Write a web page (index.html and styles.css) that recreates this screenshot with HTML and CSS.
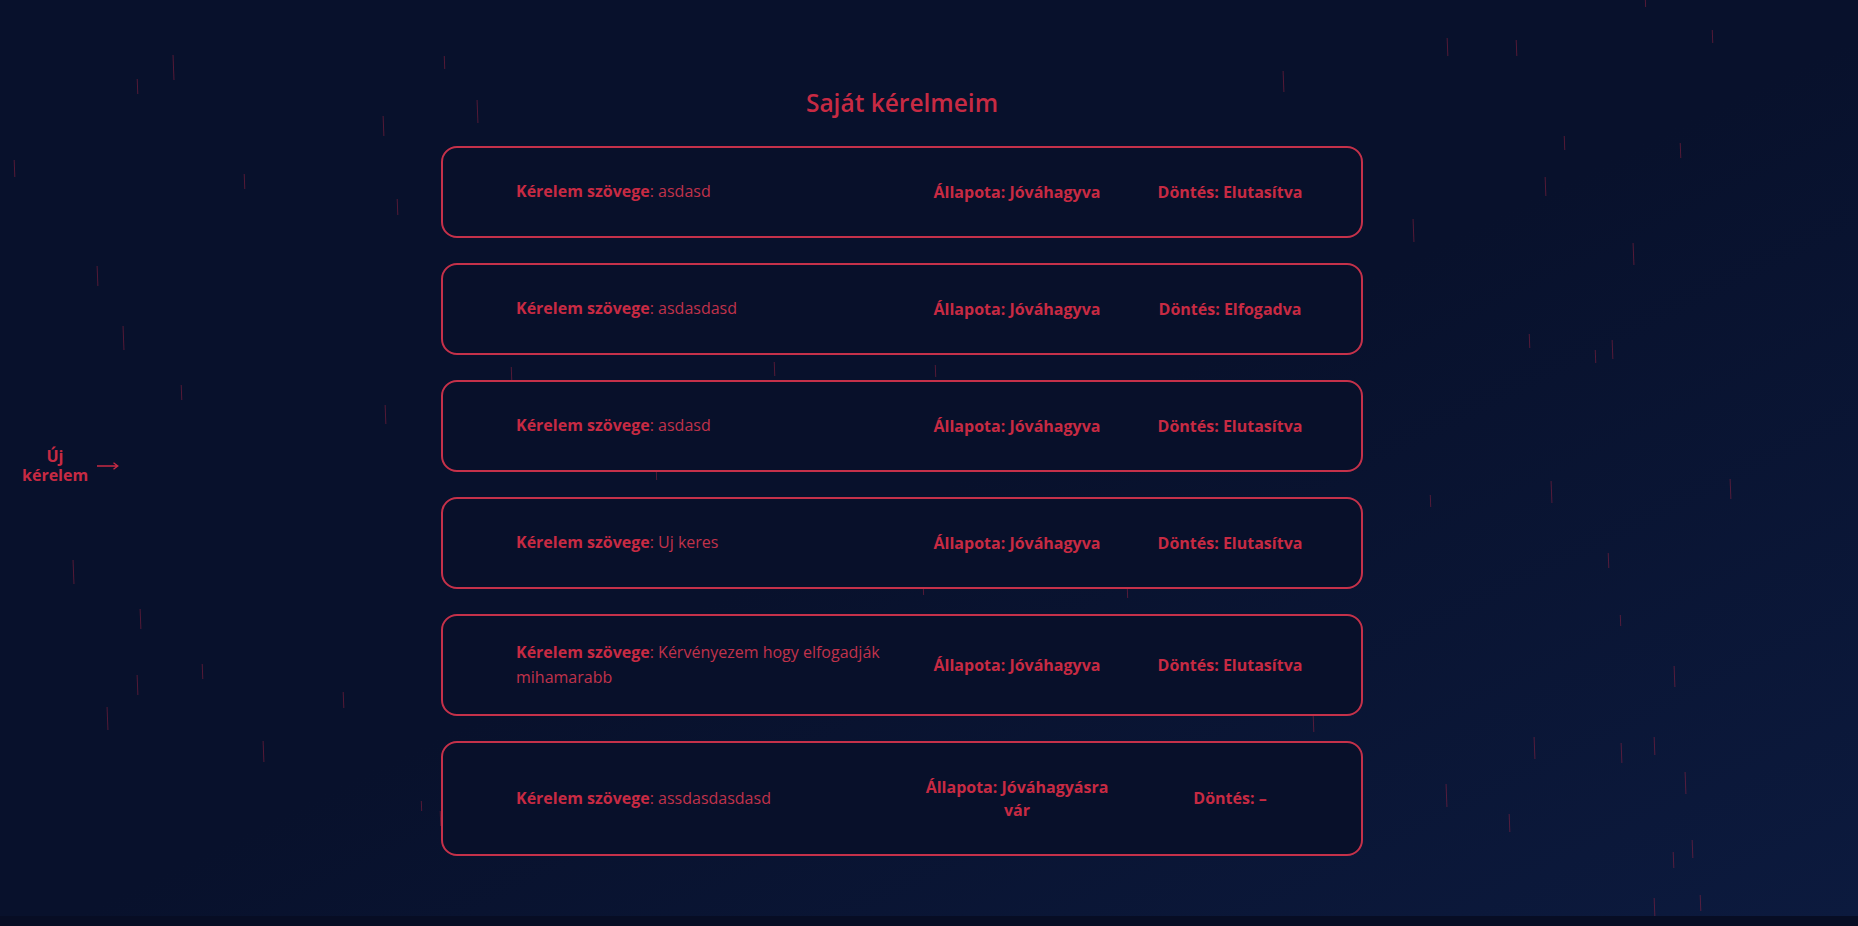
FILE: index.html
```html
<!DOCTYPE html>
<html lang="hu">
<head>
<meta charset="utf-8">
<title>Saját kérelmeim</title>
<link rel="stylesheet" href="styles.css">
</head>
<body>
<div class="page">
  <div class="rain" aria-hidden="true">
    <i class="drop" style="left:1645px;top:0px;height:7px"></i>
    <i class="drop" style="left:1712px;top:30px;height:13px"></i>
    <i class="drop" style="left:1447px;top:38px;height:18px"></i>
    <i class="drop" style="left:1516px;top:40px;height:16px"></i>
    <i class="drop" style="left:173px;top:55px;height:25px"></i>
    <i class="drop" style="left:137px;top:79px;height:15px"></i>
    <i class="drop" style="left:444px;top:56px;height:13px"></i>
    <i class="drop" style="left:477px;top:100px;height:23px"></i>
    <i class="drop" style="left:1283px;top:71px;height:21px"></i>
    <i class="drop" style="left:383px;top:116px;height:20px"></i>
    <i class="drop" style="left:1564px;top:136px;height:14px"></i>
    <i class="drop" style="left:1680px;top:143px;height:15px"></i>
    <i class="drop" style="left:14px;top:160px;height:17px"></i>
    <i class="drop" style="left:244px;top:174px;height:15px"></i>
    <i class="drop" style="left:397px;top:199px;height:16px"></i>
    <i class="drop" style="left:1545px;top:177px;height:19px"></i>
    <i class="drop" style="left:1413px;top:219px;height:23px"></i>
    <i class="drop" style="left:1633px;top:243px;height:22px"></i>
    <i class="drop" style="left:97px;top:266px;height:20px"></i>
    <i class="drop" style="left:123px;top:326px;height:24px"></i>
    <i class="drop" style="left:1529px;top:334px;height:14px"></i>
    <i class="drop" style="left:1595px;top:350px;height:13px"></i>
    <i class="drop" style="left:1612px;top:340px;height:19px"></i>
    <i class="drop" style="left:511px;top:367px;height:13px"></i>
    <i class="drop" style="left:774px;top:362px;height:14px"></i>
    <i class="drop" style="left:935px;top:365px;height:12px"></i>
    <i class="drop" style="left:181px;top:385px;height:15px"></i>
    <i class="drop" style="left:385px;top:405px;height:19px"></i>
    <i class="drop" style="left:656px;top:472px;height:8px"></i>
    <i class="drop" style="left:1551px;top:481px;height:22px"></i>
    <i class="drop" style="left:1730px;top:479px;height:20px"></i>
    <i class="drop" style="left:1430px;top:495px;height:12px"></i>
    <i class="drop" style="left:73px;top:560px;height:24px"></i>
    <i class="drop" style="left:1608px;top:553px;height:15px"></i>
    <i class="drop" style="left:140px;top:609px;height:20px"></i>
    <i class="drop" style="left:923px;top:589px;height:6px"></i>
    <i class="drop" style="left:1127px;top:589px;height:9px"></i>
    <i class="drop" style="left:1620px;top:615px;height:11px"></i>
    <i class="drop" style="left:202px;top:664px;height:15px"></i>
    <i class="drop" style="left:137px;top:675px;height:20px"></i>
    <i class="drop" style="left:1674px;top:666px;height:21px"></i>
    <i class="drop" style="left:107px;top:707px;height:23px"></i>
    <i class="drop" style="left:343px;top:692px;height:16px"></i>
    <i class="drop" style="left:1313px;top:715px;height:17px"></i>
    <i class="drop" style="left:263px;top:741px;height:21px"></i>
    <i class="drop" style="left:1534px;top:737px;height:22px"></i>
    <i class="drop" style="left:1621px;top:743px;height:20px"></i>
    <i class="drop" style="left:1654px;top:737px;height:18px"></i>
    <i class="drop" style="left:1685px;top:772px;height:22px"></i>
    <i class="drop" style="left:1446px;top:784px;height:23px"></i>
    <i class="drop" style="left:421px;top:801px;height:10px"></i>
    <i class="drop" style="left:440px;top:811px;height:15px"></i>
    <i class="drop" style="left:1509px;top:814px;height:18px"></i>
    <i class="drop" style="left:1692px;top:840px;height:18px"></i>
    <i class="drop" style="left:1673px;top:852px;height:16px"></i>
    <i class="drop" style="left:1654px;top:898px;height:18px"></i>
    <i class="drop" style="left:1700px;top:895px;height:16px"></i>
  </div>

  <div class="layout">
    <aside class="side">
      <a class="new-link" href="#">Új<br>kérelem</a>
      <svg class="arrow" width="22" height="10" viewBox="0 0 22 10" aria-hidden="true">
        <path d="M0 5 H20.5 M16.5 1.8 L20.8 5 L16.5 8.2" fill="none" stroke="currentColor" stroke-width="1.3"/>
      </svg>
    </aside>

    <main class="main">
      <h1 class="title">Saját kérelmeim</h1>
      <div class="list">
        <div class="card">
          <div class="req"><b>Kérelem szövege</b>: asdasd</div>
          <div class="stat">Állapota: Jóváhagyva</div>
          <div class="stat">Döntés: Elutasítva</div>
        </div>
        <div class="card">
          <div class="req"><b>Kérelem szövege</b>: asdasdasd</div>
          <div class="stat">Állapota: Jóváhagyva</div>
          <div class="stat">Döntés: Elfogadva</div>
        </div>
        <div class="card">
          <div class="req"><b>Kérelem szövege</b>: asdasd</div>
          <div class="stat">Állapota: Jóváhagyva</div>
          <div class="stat">Döntés: Elutasítva</div>
        </div>
        <div class="card">
          <div class="req"><b>Kérelem szövege</b>: Uj keres</div>
          <div class="stat">Állapota: Jóváhagyva</div>
          <div class="stat">Döntés: Elutasítva</div>
        </div>
        <div class="card">
          <div class="req"><b>Kérelem szövege</b>: Kérvényezem hogy elfogadják mihamarabb</div>
          <div class="stat">Állapota: Jóváhagyva</div>
          <div class="stat">Döntés: Elutasítva</div>
        </div>
        <div class="card">
          <div class="req"><b>Kérelem szövege</b>: assdasdasdasd</div>
          <div class="stat">Állapota: Jóváhagyásra vár</div>
          <div class="stat">Döntés: –</div>
        </div>
      </div>
    </main>
  </div>
</div>
</body>
</html>
```

FILE: styles.css
```css
html, body {
  margin: 0;
  padding: 0;
}

body {
  background: #070d24;
  font-family: "Open Sans", "Noto Sans", "Liberation Sans", sans-serif;
  color: #c72a43;
  overflow: hidden;
}

.page {
  position: relative;
  height: 916px;
  overflow: hidden;
  background: linear-gradient(to bottom right, #08112c 0%, #08112c 52%, #0c1a3e 100%);
}

.rain {
  position: absolute;
  inset: 0;
  pointer-events: none;
}

.drop {
  position: absolute;
  width: 1.4px;
  background: rgba(190, 38, 70, 0.42);
  transform: rotate(-2.2deg);
}

.layout {
  position: relative;
  display: grid;
  grid-template-columns: 441px 922px;
  height: 100%;
}

.side {
  display: flex;
  align-items: center;
  padding-left: 22px;
  padding-top: 16px;
  gap: 9px;
}

.new-link {
  display: block;
  width: 66px;
  text-align: center;
  font-weight: 700;
  font-size: 16px;
  line-height: 19.2px;
  color: #c72a43;
  text-decoration: none;
}

.arrow {
  display: block;
  color: #c72a43;
}

.main {
  padding-top: 85px;
}

.title {
  margin: 0;
  text-align: center;
  font-size: 24.5px;
  font-weight: 600;
  line-height: 35px;
  color: #c72a43;
}

.list {
  margin-top: 26px;
  display: flex;
  flex-direction: column;
  gap: 25px;
}

.card {
  display: grid;
  grid-template-columns: 1fr 200px 200px;
  column-gap: 13px;
  align-items: center;
  border: 2px solid #c5314a;
  border-radius: 16px;
  background: #08102a;
  padding: 0 31px 0 73px;
  font-size: 16px;
  line-height: 1.6;
}

.req {
  padding: 23.5px 0;
  color: #c0324b;
}

.req b {
  font-weight: 700;
  color: #c72a43;
}

.stat {
  padding: 32.5px 0;
  text-align: center;
  font-weight: 700;
  line-height: 23px;
}
```
